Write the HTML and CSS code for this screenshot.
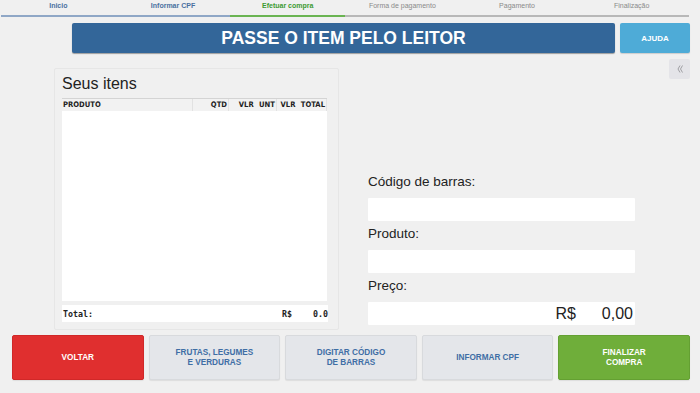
FILE: index.html
```html
<!DOCTYPE html>
<html lang="pt-BR">
<head>
    <meta charset="UTF-8">
    <meta name="viewport" content="width=device-width, initial-scale=1.0">
    <title>Efetuar compra - Autoatendimento</title>
    <link rel="stylesheet" href="styles.css">
</head>
<body>
    <nav class="steps">
        <div class="step done">Inicio</div>
        <div class="step done">Informar CPF</div>
        <div class="step active">Efetuar compra</div>
        <div class="step">Forma de pagamento</div>
        <div class="step">Pagamento</div>
        <div class="step">Finalização</div>
    </nav>

    <header class="top">
        <div class="title-bar">PASSE O ITEM PELO LEITOR</div>
        <button class="help-button">AJUDA</button>
    </header>

    <button class="collapse-button" title="Recolher">
        <svg width="8" height="10" viewBox="0 0 8 10">
            <path d="M4 1.5 L2 5 L4 8.5 M6.5 1.5 L4.5 5 L6.5 8.5" fill="none" stroke="#a0a0a4" stroke-width="1"/>
        </svg>
    </button>

    <main class="content">
        <section class="items-panel">
            <h2>Seus itens</h2>
            <div class="items-table">
                <div class="table-head">
                    <span class="col-name">PRODUTO</span>
                    <span class="col-qty">QTD</span>
                    <span class="col-unit">VLR UNT</span>
                    <span class="col-total">VLR TOTAL</span>
                </div>
                <div class="table-body"></div>
            </div>
            <div class="table-foot">
                <span>Total:</span>
                <span class="foot-value"><span>R$</span><span>0.0</span></span>
            </div>
        </section>

        <section class="item-form">
            <label class="field-label">Código de barras:</label>
            <div class="field"></div>
            <label class="field-label">Produto:</label>
            <div class="field"></div>
            <label class="field-label">Preço:</label>
            <div class="field price"><span>R$</span><span>0,00</span></div>
        </section>
    </main>

    <footer class="actions">
        <button class="action red">VOLTAR</button>
        <button class="action">FRUTAS, LEGUMES<br>E VERDURAS</button>
        <button class="action">DIGITAR CÓDIGO<br>DE BARRAS</button>
        <button class="action">INFORMAR CPF</button>
        <button class="action green">FINALIZAR<br>COMPRA</button>
    </footer>
</body>
</html>
```

FILE: styles.css
```css
:root {
    --blue: #336699;
    --light-blue: #4eabd7;
    --red: #e02f2f;
    --green: #6fae3a;
    --background: #f0f0f0;
    --text-blue: #3f6ea5;
}

* {
    margin: 0;
    padding: 0;
    box-sizing: border-box;
}

body {
    font-family: 'Liberation Sans', Arial, sans-serif;
    background-color: var(--background);
    color: #222;
    width: 700px;
    height: 393px;
    position: relative;
    overflow: hidden;
}

button {
    font-family: inherit;
    border: none;
    cursor: pointer;
}

/* progress steps */
.steps {
    display: flex;
    width: 688px;
    margin-left: 1px;
}

.step {
    flex: 1;
    text-align: center;
    font-size: 7px;
    line-height: 8px;
    padding-top: 2px;
    height: 17px;
    color: #8a8a8a;
    border-bottom: 2px solid #b8b8b8;
    margin-bottom: 6px;
}

.step.done {
    color: #4a70a0;
    font-weight: bold;
    border-bottom-color: #8fa7c6;
}

.step.active {
    color: #3d9a32;
    font-weight: bold;
    border-bottom-color: #6ab452;
}

/* title */
.top {
    display: flex;
    padding-left: 72px;
    gap: 5px;
    height: 30px;
}

.title-bar {
    width: 543px;
    background-color: var(--blue);
    color: white;
    font-weight: bold;
    font-size: 17.5px;
    display: flex;
    align-items: center;
    justify-content: center;
    border-radius: 2px;
    box-shadow: 0 1px 1px rgba(0, 0, 0, 0.35);
}

.help-button {
    width: 70px;
    background-color: var(--light-blue);
    color: white;
    font-weight: bold;
    font-size: 8px;
    border-radius: 2px;
    box-shadow: 0 1px 1px rgba(0, 0, 0, 0.15);
}

.collapse-button {
    position: absolute;
    top: 59px;
    left: 669px;
    width: 21px;
    height: 20px;
    background-color: #e4e4e8;
    border-radius: 2px;
    display: flex;
    align-items: center;
    justify-content: center;
}

/* main area */
.content {
    display: flex;
    align-items: flex-end;
    padding-left: 54px;
    margin-top: 15px;
    height: 262px;
}

.items-panel {
    width: 285px;
    height: 262px;
    border: 1px solid #e6e6e6;
    border-radius: 2px;
    padding: 5px 11px 7px 7px;
    display: flex;
    flex-direction: column;
}

.items-panel h2 {
    font-weight: normal;
    font-size: 16px;
    line-height: 19px;
    margin-bottom: 5px;
}

.items-table {
    flex: 1;
    display: flex;
    flex-direction: column;
    font-family: 'DejaVu Sans Condensed', 'DejaVu Sans', sans-serif;
    font-weight: bold;
    font-size: 7.6px;
}

.table-head {
    display: flex;
    height: 13px;
    line-height: 11px;
    border-top: 1px solid #d4d4d4;
    background-color: #f2f2f2;
    white-space: nowrap;
}

.table-head span {
    padding: 0 1px 0 1px;
    border-right: 1px solid #e2e2e2;
}

.col-name {
    width: 131px;
}

.col-qty {
    width: 36px;
    text-align: right;
}

.col-unit {
    width: 48px;
    text-align: right;
    word-spacing: 3px;
}

.col-total {
    width: 50px;
    text-align: right;
    word-spacing: 3px;
}

.table-body {
    flex: 1;
    background-color: white;
}

.table-foot {
    margin-top: 4px;
    height: 17px;
    background-color: white;
    display: flex;
    justify-content: space-between;
    align-items: center;
    padding-left: 1px;
    font-family: 'DejaVu Sans Mono', monospace;
    font-weight: bold;
    font-size: 8.3px;
    margin-right: -1px;
}

.foot-value {
    display: flex;
    gap: 21px;
}

.item-form {
    width: 267px;
    margin-left: 29px;
    margin-bottom: 5px;
    display: flex;
    flex-direction: column;
}

.field-label {
    font-size: 13.5px;
    line-height: 15px;
    margin: 5px 0 9px;
}

.field {
    height: 23px;
    background-color: white;
    border-radius: 1px;
}

.field.price {
    display: flex;
    justify-content: flex-end;
    align-items: center;
    gap: 26px;
    padding-right: 2px;
    font-size: 16px;
}

/* bottom buttons */
.actions {
    display: grid;
    grid-template-columns: repeat(5, 1fr);
    gap: 5px;
    padding: 0 10px 0 12px;
    margin-top: 5px;
}

.action {
    height: 45px;
    background-color: #e4e6ea;
    border: 1px solid #d8dadd;
    border-radius: 2px;
    color: var(--text-blue);
    font-weight: bold;
    font-size: 8.2px;
    line-height: 10px;
    box-shadow: 0 1px 1px rgba(0, 0, 0, 0.08);
}

.action.red {
    background-color: var(--red);
    border-color: #d02828;
    color: white;
}

.action.green {
    background-color: var(--green);
    border-color: #64a032;
    color: white;
}
```
